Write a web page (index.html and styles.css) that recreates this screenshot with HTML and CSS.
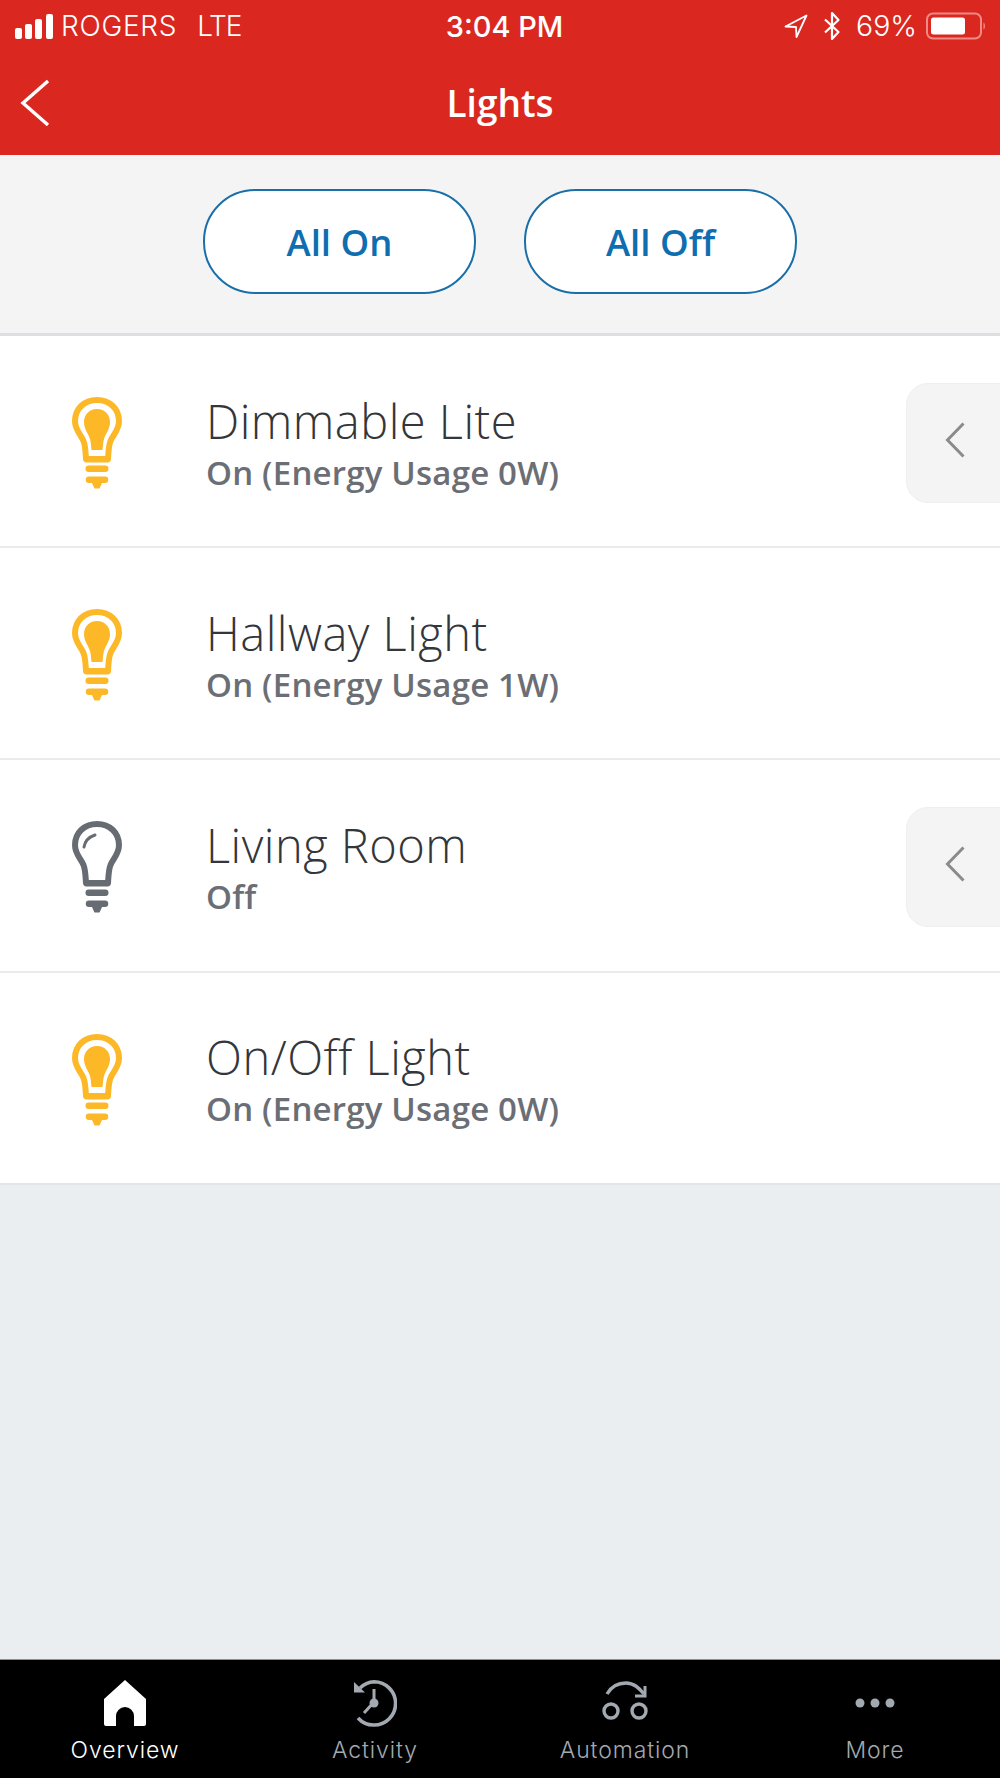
FILE: index.html
```html
<!DOCTYPE html>
<html lang="en">
<head>
<meta charset="utf-8">
<title>Lights</title>
<link rel="stylesheet" href="styles.css">
</head>
<body>
<div class="app">
  <header class="header">
    <div class="status">
      <div class="status-left">
        <svg class="signal" width="39" height="25" viewBox="0 0 39 25"><rect x="0" y="14" width="7" height="11" rx="2"/><rect x="10" y="10" width="7" height="15" rx="2"/><rect x="20" y="5" width="7" height="20" rx="2"/><rect x="31" y="0" width="7" height="25" rx="2"/></svg>
        <span class="carrier">ROGERS</span>
        <span class="network">LTE</span>
      </div>
      <div class="time">3:04 PM</div>
      <div class="status-right">
        <svg class="loc" width="24" height="24" viewBox="0 0 24 24"><path d="M22.5 1.5 1.5 12.5 12 13 12.5 23Z" fill="none" stroke="#fff" stroke-width="1.8" stroke-linejoin="round"/></svg>
        <svg class="bt" width="18" height="30" viewBox="0 0 18 30"><path d="M2 8.5 15.5 21 9 28V2l6.500 7L2 21.500" fill="none" stroke="#fff" stroke-width="2.200" stroke-linejoin="round"/></svg>
        <span class="pct">69%</span>
        <svg class="batt" width="60" height="28" viewBox="0 0 60 28"><rect x="1" y="1.500" width="54" height="25" rx="6" fill="none" stroke="#f08a84" stroke-width="2"/><rect x="5" y="5.500" width="34" height="17" rx="2.500" fill="#fff"/><path d="M57.500 10.500c2 1 2 6 0 7z" fill="#f08a84"/></svg>
      </div>
    </div>
    <div class="nav">
      <svg class="back" width="30" height="48" viewBox="0 0 30 48"><path d="M28 2 3 24l25 22" fill="none" stroke="#fff" stroke-width="3.400"/></svg>
      <h1 class="title">Lights</h1>
    </div>
  </header>

  <section class="toolbar">
    <button class="pill">All On</button>
    <button class="pill">All Off</button>
  </section>

  <main class="list">
    <div class="row">
      <svg class="bulb" width="50" height="92" viewBox="0 0 50 92"><use href="#bulb-on"/></svg>
      <div class="info"><div class="name">Dimmable Lite</div><div class="state">On (Energy Usage 0W)</div></div>
      <div class="handle"><svg width="20" height="36" viewBox="0 0 20 36"><path d="M18.500 1.500 2.500 18l16 16.500" fill="none" stroke="#8b8b8d" stroke-width="3"/></svg></div>
    </div>
    <div class="row">
      <svg class="bulb" width="50" height="92" viewBox="0 0 50 92"><use href="#bulb-on"/></svg>
      <div class="info"><div class="name">Hallway Light</div><div class="state">On (Energy Usage 1W)</div></div>
    </div>
    <div class="row">
      <svg class="bulb" width="50" height="92" viewBox="0 0 50 92"><use href="#bulb-off"/></svg>
      <div class="info"><div class="name">Living Room</div><div class="state">Off</div></div>
      <div class="handle"><svg width="20" height="36" viewBox="0 0 20 36"><path d="M18.500 1.500 2.500 18l16 16.500" fill="none" stroke="#8b8b8d" stroke-width="3"/></svg></div>
    </div>
    <div class="row">
      <svg class="bulb" width="50" height="92" viewBox="0 0 50 92"><use href="#bulb-on"/></svg>
      <div class="info"><div class="name">On/Off Light</div><div class="state">On (Energy Usage 0W)</div></div>
    </div>
  </main>

  <div class="spacer"></div>

  <nav class="tabs">
    <div class="tab active">
      <svg width="44" height="48" viewBox="0 0 44 48"><path fill="#fff" d="M22 1 43 20v25a2 2 0 0 1-2 2H31V37a9 9 0 0 0-18 0v10H3a2 2 0 0 1-2-2V20Z"/></svg>
      <span>Overview</span>
    </div>
    <div class="tab">
      <svg width="44" height="48" viewBox="0 0 44 48" fill="none" stroke="#a3a9b1"><path stroke-width="3.600" d="M7 9A22 22 0 0 1 21 2.800 21.500 21.500 0 0 1 21 46 21 21 0 0 1 5 39"/><path fill="#a3a9b1" stroke="none" d="M1 3 12 13.500H1Z"/><path stroke-width="3" d="M21 10v13L11 34"/><circle cx="21" cy="24" r="4.500" fill="#a3a9b1" stroke="none"/></svg>
      <span>Activity</span>
    </div>
    <div class="tab">
      <svg width="46" height="48" viewBox="0 0 46 48" fill="none" stroke="#a3a9b1" stroke-width="3.400"><path d="M5 15C9 8 16 4 24 4c8 0 13 5 18 11"/><path d="M43 7v10H33" stroke-width="3"/><circle cx="9" cy="32" r="7"/><circle cx="37" cy="32" r="7"/></svg>
      <span>Automation</span>
    </div>
    <div class="tab">
      <svg width="44" height="48" viewBox="0 0 44 48" fill="#a3a9b1"><circle cx="7" cy="24" r="4.500"/><circle cx="22" cy="24" r="4.500"/><circle cx="37" cy="24" r="4.500"/></svg>
      <span>More</span>
    </div>
  </nav>
</div>

<svg class="defs" width="0" height="0" aria-hidden="true">
  <defs>
    <g id="bulb-on">
      <path d="M25 3C12 3 3 12 3 24c0 9 5.500 13 8.500 20 2 5 2 11 2.500 18h22c.5-7 .5-13 2.500-18 3-7 8.500-11 8.500-20C47 12 38 3 25 3Z" fill="none" stroke="#fdb827" stroke-width="6" stroke-linejoin="round"/>
      <path d="M25 12c-8 0-13 6-13 13 0 7 4 11 6 17 1 4 1 7 1.500 11h11c.5-4 .5-7 1.500-11 2-6 6-10 6-17 0-7-5-13-13-13Z" fill="#fdb827"/>
      <rect x="12" y="59" width="26" height="6.500" rx="2" fill="#fdb827"/>
      <rect x="13.500" y="68.500" width="23" height="6.500" rx="3.200" fill="#fdb827"/>
      <path d="M17 79.500h16a3 3 0 0 1 0 6.500h-3l-2 4.500a1 1 0 0 1-1 1h-4a1 1 0 0 1-1-1l-2-4.500h-3a3 3 0 0 1 0-6.500Z" fill="#fdb827"/>
    </g>
    <g id="bulb-off">
      <path d="M25 3C12 3 3 12 3 24c0 9 5.500 13 8.500 20 2 5 2 11 2.500 18h22c.5-7 .5-13 2.500-18 3-7 8.500-11 8.500-20C47 12 38 3 25 3Z" fill="none" stroke="#676b72" stroke-width="6" stroke-linejoin="round"/>
      <path d="M12 26c1-6 5-10 11-12" fill="none" stroke="#676b72" stroke-width="3" stroke-linecap="round"/>
      <rect x="12" y="59" width="26" height="6.500" rx="2" fill="#676b72"/>
      <rect x="13.500" y="68.500" width="23" height="6.500" rx="3.200" fill="#676b72"/>
      <path d="M17 79.500h16a3 3 0 0 1 0 6.500h-3l-2 4.500a1 1 0 0 1-1 1h-4a1 1 0 0 1-1-1l-2-4.500h-3a3 3 0 0 1 0-6.500Z" fill="#676b72"/>
    </g>
  </defs>
</svg>
</body>
</html>
```
FILE: styles.css
```css
* { box-sizing: border-box; }
html, body { margin: 0; padding: 0; }
body { background: #ebeef1; font-family: "Open Sans", "Noto Sans", sans-serif; }

.app { width: 1000px; height: 1778px; display: flex; flex-direction: column; overflow: hidden; }
.defs { position: absolute; }

.header { height: 155px; background: #da2821; color: #fff; flex: none; }
.status {
  height: 52px; padding: 0 14px 0 15px;
  display: grid; grid-template-columns: 1fr auto 1fr; align-items: center;
  font-family: Inter, "Liberation Sans", sans-serif; font-size: 28px; line-height: 1;
}
.status-left { display: flex; align-items: center; }
.signal { fill: #fff; margin-right: 7px; }
.carrier { font-weight: 300; margin-right: 20px; letter-spacing: 0.7px; }
.network { font-weight: 300; letter-spacing: -1.2px; }
.time { font-weight: 500; font-size: 29px; margin-left: 8px; }
.status-right { display: flex; align-items: center; justify-content: flex-end; }
.loc { margin-right: 15px; }
.bt { margin-right: 15px; }
.pct { font-weight: 300; margin-right: 9px; font-size: 28.500px; }

.nav { height: 102px; padding: 0 20px; display: grid; grid-template-columns: 1fr auto 1fr; align-items: center; }
.back { justify-self: start; }
.title { grid-column: 2; margin: 0 0 2px; font-size: 37px; font-weight: 600; line-height: 1; }

.toolbar {
  height: 181px; flex: none; background: #f4f4f5; border-bottom: 3px solid #dcdee1;
  padding-top: 34px; display: flex; justify-content: center; align-items: flex-start; gap: 48px;
}
.pill {
  width: 273px; height: 105px; border: 2.500px solid #1a6fa8; border-radius: 52px; background: #fff;
  color: #0f6eb0; font-family: "Open Sans", sans-serif; font-size: 36.500px; font-weight: 600; padding: 0;
}

.list { flex: none; background: #fff; }
.row {
  height: 212.200px; position: relative; display: flex; align-items: center;
  padding-left: 72px; border-bottom: 2px solid #e9ebed; overflow: hidden;
}
.row:last-child { border-bottom: 2px solid #e3e6e9; }
.bulb { flex: none; margin-top: 4px; }
.info { margin-left: 84px; margin-top: 2px; }
.name { font-size: 47px; font-weight: 300; line-height: 56px; color: #33363a; letter-spacing: 0.5px; }
.state { font-size: 33px; font-weight: 600; line-height: 38px; color: #6b6e75; margin-top: 5px; letter-spacing: 0.2px; }
.handle {
  position: absolute; right: -20px; top: 47px; width: 114px; height: 120px;
  background: #f4f4f5; border: 1px solid #eeeff1; border-radius: 22px;
  padding: 38px 0 0 38px;
}
.handle svg { display: block; }

.spacer { flex: 1; }

.tabs { height: 119px; flex: none; background: #000; border-top: 1px solid #8b8e91; display: grid; grid-template-columns: repeat(4, 1fr); padding-top: 19px; }
.tab {
  display: flex; flex-direction: column; align-items: center;
  color: #a3a9b1; font-family: Inter, "Liberation Sans", sans-serif; font-size: 23px; font-weight: 300; letter-spacing: 0.9px; line-height: 28px;
}
.tab svg { display: block; margin-bottom: 9px; }
.tab.active { color: #fff; }
```
